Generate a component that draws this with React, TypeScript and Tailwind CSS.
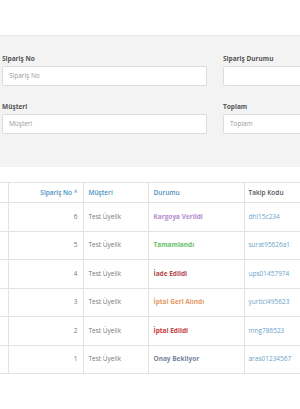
const orders = [
  { no: 6, customer: 'Test Üyelik', status: 'Kargoya Verildi', color: 'text-[#b08ccc]', code: 'dhl15c234' },
  { no: 5, customer: 'Test Üyelik', status: 'Tamamlandı', color: 'text-[#68c068]', code: 'surat95626a1' },
  { no: 4, customer: 'Test Üyelik', status: 'İade Edildi', color: 'text-[#b04a4a]', code: 'ups01457974' },
  { no: 3, customer: 'Test Üyelik', status: 'İptal Geri Alındı', color: 'text-[#e39a66]', code: 'yurtici495623' },
  { no: 2, customer: 'Test Üyelik', status: 'İptal Edildi', color: 'text-[#c83a3a]', code: 'mng786523' },
  { no: 1, customer: 'Test Üyelik', status: 'Onay Bekliyor', color: 'text-[#76869a]', code: 'aras01234567' }
];

function Field({ label, placeholder }: { label: string; placeholder: string }) {
  return (
    <div>
      <label className="block h-[10px] text-[6.5px] font-bold leading-[10px] text-[#555]">{label}</label>
      <div className="mt-[2px] h-[20px] rounded-[2px] border border-[#dcdcdc] bg-white px-[6px] text-[6.5px] leading-[18px] text-[#999]">
        {placeholder}
      </div>
    </div>
  );
}

export default function App() {
  return (
    <div className="h-[409px] w-[300px] overflow-hidden bg-white font-['Open_Sans',sans-serif]">
      <div className="h-[35px]" />
      <section className="h-[132px] border-t border-[#e8e8e8] bg-[#f3f3f3] pl-[2px] pt-[18px]">
        <div className="grid w-[400px] grid-cols-[205px_180px] gap-x-[16px] gap-y-[16px]">
          <Field label="Sipariş No" placeholder="Sipariş No" />
          <Field label="Sipariş Durumu" placeholder="" />
          <Field label="Müşteri" placeholder="Müşteri" />
          <Field label="Toplam" placeholder="Toplam" />
        </div>
      </section>
      <div className="mt-[15px] ml-[-12px]">
        <table className="w-[360px] table-fixed border-collapse text-[6.5px]">
          <colgroup>
            <col className="w-[20px]" />
            <col className="w-[75px]" />
            <col className="w-[65px]" />
            <col className="w-[96px]" />
            <col className="w-[104px]" />
          </colgroup>
          <thead>
            <tr className="h-[20px] border-y border-[#e3e3e3]">
              <th className="border-r border-[#e3e3e3]">
                <span className="mx-auto block h-[5px] w-[5px] border border-[#bbb]" />
              </th>
              <th className="border-r border-[#e3e3e3] pr-[5px] text-right font-semibold text-[#4a90c2]">Sipariş No ^</th>
              <th className="border-r border-[#e3e3e3] pl-[5px] text-left font-semibold text-[#4a90c2]">Müşteri</th>
              <th className="border-r border-[#e3e3e3] pl-[5px] text-left font-semibold text-[#4a90c2]">Durumu</th>
              <th className="pl-[4px] text-left font-semibold text-[#555]">Takip Kodu</th>
            </tr>
          </thead>
          <tbody>
            {orders.map((o) => (
              <tr key={o.no} className="h-[28.5px] border-b border-[#e3e3e3]">
                <td className="border-r border-[#e3e3e3]">
                  <span className="mx-auto block h-[5px] w-[5px] border border-[#ccc]" />
                </td>
                <td className="border-r border-[#e3e3e3] pr-[5px] text-right text-[#777]">{o.no}</td>
                <td className="border-r border-[#e3e3e3] pl-[5px] text-[#777]">{o.customer}</td>
                <td className={`border-r border-[#e3e3e3] pl-[5px] font-bold ${o.color}`}>{o.status}</td>
                <td className="pl-[4px] text-[#6a9fc9]">{o.code}</td>
              </tr>
            ))}
          </tbody>
        </table>
      </div>
    </div>
  );
}
